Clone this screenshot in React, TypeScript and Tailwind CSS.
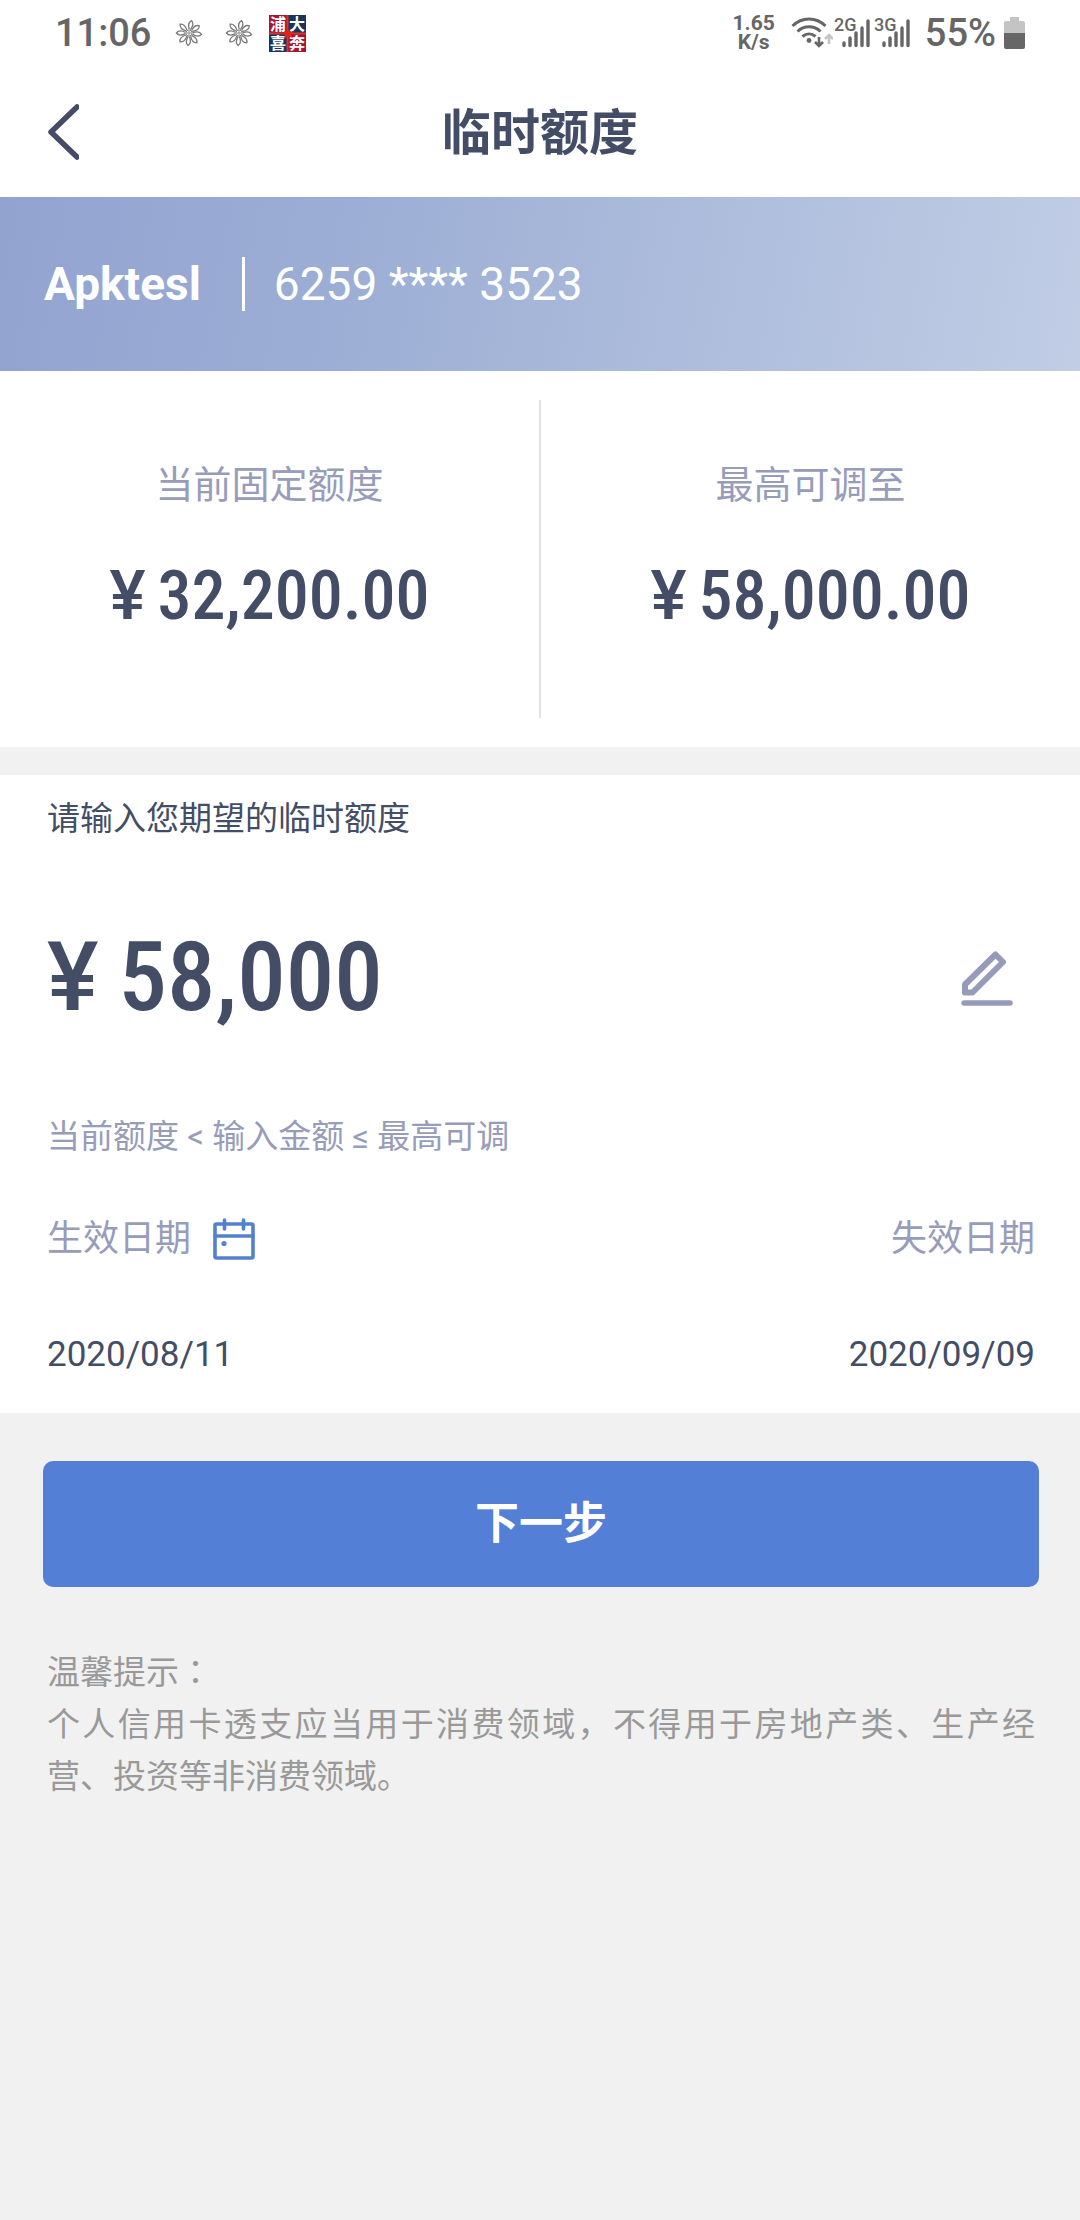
import { useRef, useState } from 'react'

const petals = [12, 55, 97, 142, 184, 226, 270, 315]

function FlowerIcon() {
  return (
    <svg className="h-7 w-7" viewBox="0 0 28 28" fill="#fff" stroke="#7a7a7a" strokeWidth="1.3" aria-hidden="true">
      {petals.map((angle) => (
        <path
          key={angle}
          d="M13.400 10.500C11.600 7 11.600 3.200 14 1.400C16.400 3.200 16.400 7 14.600 10.500"
          transform={`rotate(${angle} 14 14)`}
        />
      ))}
      <circle cx="14" cy="14" r="3" strokeWidth="0.900" />
      <circle cx="14" cy="14" r="1.200" strokeWidth="0.900" />
    </svg>
  )
}

function BankAppIcon() {
  return (
    <svg className="h-[37px] w-[37px] overflow-visible" viewBox="0 0 37 37" aria-hidden="true">
      <rect width="37" height="37" fill="#a8152f" />
      <rect x="19" width="18" height="18" fill="#17365c" />
      <rect y="19" width="18" height="18" fill="#17365c" />
      <path d="M18.500 0V37M0 18.500H37" stroke="#d9322f" strokeWidth="2" />
      <g fill="#fff" fontFamily="Noto Sans CJK SC, sans-serif" fontWeight="700" fontSize="16" textAnchor="middle">
        <text x="9" y="15">浦</text>
        <text x="28" y="15">大</text>
        <text x="9" y="34">喜</text>
        <text x="28" y="34">奔</text>
      </g>
      <path d="M19 14L21 17L25 16L22 20L24 23L19 21L15 24L16 20L12 18L17 17Z" fill="#e2231a" />
    </svg>
  )
}

function WifiIcon() {
  return (
    <svg className="h-8 w-[42px]" viewBox="0 0 42 32" fill="none" stroke="#666" strokeWidth="3" aria-hidden="true">
      <path d="M1.500 9C11 -0.300 25 -0.300 34.500 9M6.500 14.500C13 8.300 23 8.300 29.500 14.500M11.500 19.500C15.500 16 20.500 16 24.500 19.500" />
      <circle cx="18" cy="23.500" r="2.400" fill="#666" stroke="none" />
      <path d="M28 20V29M24 25L28 29L32 25" strokeWidth="2.600" />
      <path d="M38 27V18M34 22L38 18L42 22" stroke="#c4c4c4" strokeWidth="2.600" />
    </svg>
  )
}

function SignalIcon({ label }: { label: string }) {
  return (
    <svg className="h-8 w-10 overflow-visible" viewBox="0 0 40 32" aria-hidden="true">
      <path d="M11 26V28.500M17 21V28.500M23 16V28.500M29 11V28.500M35 4V28.500" stroke="#666" strokeWidth="3.400" strokeLinecap="round" />
      <text x="1" y="14" fill="#666" fontFamily="Roboto, sans-serif" fontSize="18" fontWeight="500">
        {label}
      </text>
    </svg>
  )
}

function BatteryIcon() {
  return (
    <svg className="h-8 w-[21px]" viewBox="0 0 21 32" aria-hidden="true">
      <path d="M6 0H15V4H19Q21 4 21 6V16H0V6Q0 4 2 4H6Z" fill="#c4c4c4" />
      <path d="M0 16H21V30Q21 32 19 32H2Q0 32 0 30Z" fill="#666" />
    </svg>
  )
}

function BackIcon() {
  return (
    <svg className="h-14 w-8" viewBox="0 0 32 56" fill="none" stroke="#444c66" strokeWidth="5.500" strokeLinecap="round" strokeLinejoin="round" aria-hidden="true">
      <path d="M30 3L4 28L30 53" />
    </svg>
  )
}

function EditIcon() {
  return (
    <svg className="h-[60px] w-[52px]" viewBox="0 -4 52 60" fill="none" stroke="#969bbb" strokeLinecap="round" strokeLinejoin="round" aria-hidden="true">
      <path d="M4 33.500L34.500 3.500L42 11L11.500 41.500H4Z" strokeWidth="6" />
      <path d="M3 52H49" strokeWidth="5.500" />
    </svg>
  )
}

function CalendarIcon() {
  return (
    <svg className="h-[42px] w-[42px]" viewBox="0 0 42 42" fill="none" stroke="#5580cf" strokeWidth="3.600" strokeLinecap="round" aria-hidden="true">
      <rect x="2" y="6" width="38" height="34" rx="1.500" />
      <path d="M2 18H40M11.500 2V11M30.500 2V11" />
      <circle cx="11" cy="25.500" r="2.600" fill="#5580cf" stroke="none" />
    </svg>
  )
}

function StatusBar() {
  return (
    <div className="flex h-[66px] items-center justify-between px-[55px] text-[#666]">
      <div className="flex items-center">
        <span className="text-[38px] leading-none font-medium">11:06</span>
        <div className="ml-6 flex items-center gap-[22px]">
          <FlowerIcon />
          <FlowerIcon />
        </div>
        <div className="ml-4">
          <BankAppIcon />
        </div>
      </div>
      <div className="flex items-center">
        <div className="text-center text-[21px] leading-[19px] font-bold">
          <div>1.65</div>
          <div>K/s</div>
        </div>
        <div className="ml-4 flex items-center">
          <WifiIcon />
          <SignalIcon label="2G" />
          <SignalIcon label="3G" />
        </div>
        <span className="mr-2 ml-3 text-[38px] leading-none font-medium">55%</span>
        <BatteryIcon />
      </div>
    </div>
  )
}

interface LimitProps {
  label: string
  amount: string
}

function Limit({ label, amount }: LimitProps) {
  return (
    <div className="flex flex-1 flex-col items-center pt-[58px]">
      <p className="text-[38px] leading-[54px] text-[#979cba]">{label}</p>
      <p className="mt-11 flex gap-3 font-['Roboto_Condensed','Roboto',sans-serif] text-[68px] leading-[80px] font-medium">
        <span className="font-['Roboto',sans-serif]">¥</span>
        {amount}
      </p>
    </div>
  )
}

export default function App() {
  const [amount, setAmount] = useState('58,000')
  const amountInput = useRef<HTMLInputElement>(null)

  return (
    <div className="min-h-screen bg-[#f1f1f1] font-['Roboto','Noto_Sans_CJK_SC',sans-serif] text-[#444d66]" lang="zh-CN">
      <header className="bg-white">
        <StatusBar />
        <div className="grid h-[131px] grid-cols-[1fr_auto_1fr] items-center px-[47px]">
          <button type="button" aria-label="返回" className="justify-self-start">
            <BackIcon />
          </button>
          <h1 className="pt-1 text-[49px] leading-none font-bold">临时额度</h1>
        </div>
      </header>

      <main>
        <section className="flex h-[174px] items-center bg-linear-[100deg,#92a3d0,#9dafd5_35%,#c1cde5] px-11 text-[46px] leading-none text-white">
          <span className="font-bold">Apktesl</span>
          <span className="mr-[29px] ml-[41px] h-[54px] w-[3px] bg-white" />
          <span>6259 **** 3523</span>
        </section>

        <section className="flex bg-white py-[29px]">
          <Limit label="当前固定额度" amount="32,200.00" />
          <div className="h-[318px] w-[2px] bg-[#e3e3e5]" />
          <Limit label="最高可调至" amount="58,000.00" />
        </section>

        <section className="mt-7 bg-white pt-5 pr-[45px] pb-8 pl-[47px]">
          <label htmlFor="amount" className="block text-[33px] leading-[48px]">
            请输入您期望的临时额度
          </label>
          <div className="mt-[74px] flex items-center font-['Roboto_Condensed','Roboto',sans-serif] text-[97px] leading-[120px] font-medium">
            <span className="font-['Roboto',sans-serif]">¥</span>
            <input
              ref={amountInput}
              id="amount"
              className="ml-5 min-w-0 flex-1 bg-transparent outline-none"
              inputMode="numeric"
              value={amount}
              onChange={(e) => setAmount(e.target.value)}
            />
            <button type="button" aria-label="修改额度" className="mr-[22px]" onClick={() => amountInput.current?.focus()}>
              <EditIcon />
            </button>
          </div>
          <p className="mt-[76px] text-[33px] leading-[48px] text-[#979cba]">当前额度 &lt; 输入金额 ≤ 最高可调</p>
          <div className="mt-[52px] flex items-center justify-between text-[36px] leading-[52px] text-[#979cba]">
            <div className="flex items-center gap-[22px]">
              <span>生效日期</span>
              <button type="button" aria-label="选择生效日期">
                <CalendarIcon />
              </button>
            </div>
            <span>失效日期</span>
          </div>
          <div className="mt-16 flex justify-between text-[35px] leading-[52px]">
            <time dateTime="2020-08-11">2020/08/11</time>
            <time dateTime="2020-09-09">2020/09/09</time>
          </div>
        </section>

        <div className="pt-12 pr-[41px] pl-[43px]">
          <button type="button" className="h-[126px] w-full rounded-[10px] bg-[#537fd6] text-[44px] font-bold text-white">
            下一步
          </button>
        </div>

        <section className="pt-[60px] pr-[45px] pl-[47px] text-[33px] leading-[52px] text-[#999]">
          <p>
            温馨提示<span className="font-['Noto_Sans_CJK_TC',sans-serif] leading-none" lang="zh-TW">：</span>
          </p>
          <p className="text-justify">个人信用卡透支应当用于消费领域，不得用于房地产类、生产经营、投资等非消费领域。</p>
        </section>
      </main>
    </div>
  )
}
